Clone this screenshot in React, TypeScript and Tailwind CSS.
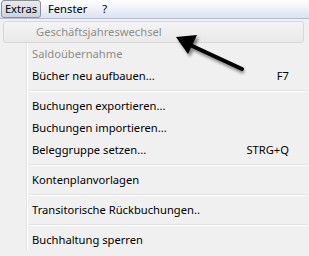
const font = { fontFamily: '"Noto Sans", "Liberation Sans", sans-serif' };

type Item =
  | { sep: true }
  | { sep?: false; label: string; shortcut?: string; disabled?: boolean; hot?: boolean };

const items: Item[] = [
  { label: "Geschäftsjahreswechsel", disabled: true, hot: true },
  { label: "Saldoübernahme", disabled: true },
  { label: "Bücher neu aufbauen...", shortcut: "F7" },
  { sep: true },
  { label: "Buchungen exportieren..." },
  { label: "Buchungen importieren..." },
  { label: "Beleggruppe setzen...", shortcut: "STRG+Q" },
  { sep: true },
  { label: "Kontenplanvorlagen" },
  { sep: true },
  { label: "Transitorische Rückbuchungen.." },
  { sep: true },
  { label: "Buchhaltung sperren" },
];

const Arrow = () => (
  <svg className="absolute left-[166px] top-[30px]" width="90" height="52" viewBox="0 0 90 52">
    <defs>
      <filter id="sh" x="-20%" y="-20%" width="140%" height="140%">
        <feGaussianBlur stdDeviation="1.6" />
      </filter>
    </defs>
    <g opacity="0.45" filter="url(#sh)" transform="translate(2,3)">
      <line x1="22" y1="14" x2="76" y2="39" stroke="#000" strokeWidth="4" />
      <polygon points="10,7 31,5 22,24" fill="#000" />
    </g>
    <line x1="22" y1="14" x2="76" y2="39" stroke="#000" strokeWidth="4" strokeLinecap="round" />
    <polygon points="10,7 31,5 22,24" fill="#000" />
  </svg>
);

export default function App() {
  return (
    <div className="relative w-[309px] h-[256px] overflow-hidden bg-[#f0f0f0] text-[11.2px]" style={font}>
      <div className="flex items-center h-[19px] border-b border-[#b6bccc] bg-gradient-to-b from-[#ffffff] to-[#dbe3f1] text-black">
        <div className="h-[18px] w-[40px] ml-[1px] flex items-center justify-center border border-[#8e8f8f] rounded-[3px] bg-gradient-to-b from-[#e6eaf1] to-[#cdd4e0] leading-none">
          Extras
        </div>
        <div className="ml-[7px] leading-none">Fenster</div>
        <div className="ml-[15px] leading-none">?</div>
      </div>
      <div className="relative pt-[2px] pr-[2px]">
        <div className="absolute left-[26px] top-0 bottom-0 w-[2px] border-l border-[#e2e3e3] bg-white" />
        {items.map((it, i) =>
          it.sep ? (
            <div key={i} className="h-[8px] flex items-center pl-[30px]">
              <div className="w-full h-[2px] border-t border-[#e0e0e0] bg-white" />
            </div>
          ) : (
            <div
              key={i}
              className={
                "relative h-[22px] flex items-center pl-[32px] pr-[18px] " +
                (it.hot
                  ? "mx-[3px] pl-[29px] rounded-[3px] border border-[#d7d7d7] bg-gradient-to-b from-[#f4f4f4] to-[#e9e9e9]"
                  : "")
              }
            >
              <span className={"flex-1 " + (it.disabled ? "text-[#8d8d8d]" : "text-black")}>{it.label}</span>
              {it.shortcut && <span className="text-black">{it.shortcut}</span>}
            </div>
          )
        )}
      </div>
      <Arrow />
    </div>
  );
}
